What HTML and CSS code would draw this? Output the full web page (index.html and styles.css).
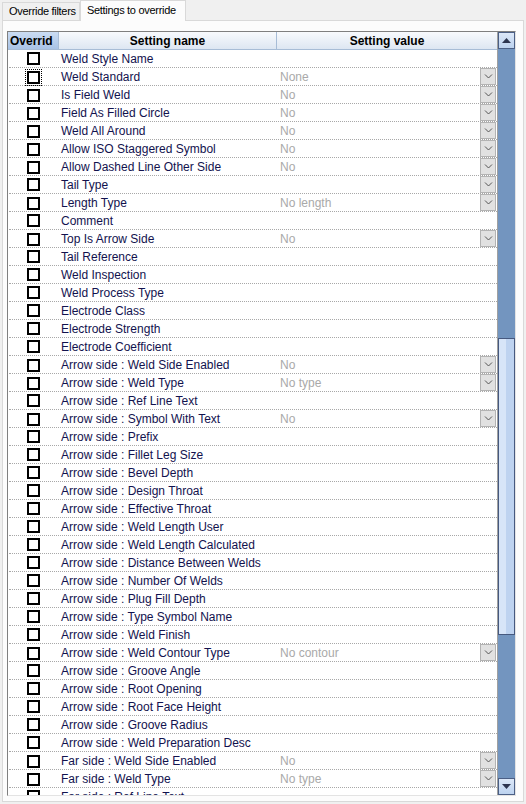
FILE: index.html
```html
<!DOCTYPE html>
<html lang="en">
<head>
  <meta charset="UTF-8">
  <title>Settings to override</title>
  <link rel="stylesheet" href="styles.css">
</head>
<body>
  <div class="tabs">
    <div class="tab">Override filters</div>
    <div class="tab active">Settings to override</div>
  </div>

  <div class="panel">
    <div class="grid">
      <div class="table">
        <div class="head">
          <div class="hcell selected">Overrid</div>
          <div class="hcell">Setting name</div>
          <div class="hcell">Setting value</div>
        </div>

        <div class="rows">
          <div class="row"><span class="check"><i class="box"></i></span><span class="name">Weld Style Name</span><span class="value"></span></div>
          <div class="row"><span class="check"><i class="box focus"></i></span><span class="name">Weld Standard</span><span class="value">None<b class="drop"><svg width="9" height="5" viewBox="0 0 9 5"><polyline points="1,0.5 4.5,4 8,0.5"/></svg></b></span></div>
          <div class="row"><span class="check"><i class="box"></i></span><span class="name">Is Field Weld</span><span class="value">No<b class="drop"><svg width="9" height="5" viewBox="0 0 9 5"><polyline points="1,0.5 4.5,4 8,0.5"/></svg></b></span></div>
          <div class="row"><span class="check"><i class="box"></i></span><span class="name">Field As Filled Circle</span><span class="value">No<b class="drop"><svg width="9" height="5" viewBox="0 0 9 5"><polyline points="1,0.5 4.5,4 8,0.5"/></svg></b></span></div>
          <div class="row"><span class="check"><i class="box"></i></span><span class="name">Weld All Around</span><span class="value">No<b class="drop"><svg width="9" height="5" viewBox="0 0 9 5"><polyline points="1,0.5 4.5,4 8,0.5"/></svg></b></span></div>
          <div class="row"><span class="check"><i class="box"></i></span><span class="name">Allow ISO Staggered Symbol</span><span class="value">No<b class="drop"><svg width="9" height="5" viewBox="0 0 9 5"><polyline points="1,0.5 4.5,4 8,0.5"/></svg></b></span></div>
          <div class="row"><span class="check"><i class="box"></i></span><span class="name">Allow Dashed Line Other Side</span><span class="value">No<b class="drop"><svg width="9" height="5" viewBox="0 0 9 5"><polyline points="1,0.5 4.5,4 8,0.5"/></svg></b></span></div>
          <div class="row"><span class="check"><i class="box"></i></span><span class="name">Tail Type</span><span class="value"><b class="drop"><svg width="9" height="5" viewBox="0 0 9 5"><polyline points="1,0.5 4.5,4 8,0.5"/></svg></b></span></div>
          <div class="row"><span class="check"><i class="box"></i></span><span class="name">Length Type</span><span class="value">No length<b class="drop"><svg width="9" height="5" viewBox="0 0 9 5"><polyline points="1,0.5 4.5,4 8,0.5"/></svg></b></span></div>
          <div class="row"><span class="check"><i class="box"></i></span><span class="name">Comment</span><span class="value"></span></div>
          <div class="row"><span class="check"><i class="box"></i></span><span class="name">Top Is Arrow Side</span><span class="value">No<b class="drop"><svg width="9" height="5" viewBox="0 0 9 5"><polyline points="1,0.5 4.5,4 8,0.5"/></svg></b></span></div>
          <div class="row"><span class="check"><i class="box"></i></span><span class="name">Tail Reference</span><span class="value"></span></div>
          <div class="row"><span class="check"><i class="box"></i></span><span class="name">Weld Inspection</span><span class="value"></span></div>
          <div class="row"><span class="check"><i class="box"></i></span><span class="name">Weld Process Type</span><span class="value"></span></div>
          <div class="row"><span class="check"><i class="box"></i></span><span class="name">Electrode Class</span><span class="value"></span></div>
          <div class="row"><span class="check"><i class="box"></i></span><span class="name">Electrode Strength</span><span class="value"></span></div>
          <div class="row"><span class="check"><i class="box"></i></span><span class="name">Electrode Coefficient</span><span class="value"></span></div>
          <div class="row"><span class="check"><i class="box"></i></span><span class="name">Arrow side : Weld Side Enabled</span><span class="value">No<b class="drop"><svg width="9" height="5" viewBox="0 0 9 5"><polyline points="1,0.5 4.5,4 8,0.5"/></svg></b></span></div>
          <div class="row"><span class="check"><i class="box"></i></span><span class="name">Arrow side : Weld Type</span><span class="value">No type<b class="drop"><svg width="9" height="5" viewBox="0 0 9 5"><polyline points="1,0.5 4.5,4 8,0.5"/></svg></b></span></div>
          <div class="row"><span class="check"><i class="box"></i></span><span class="name">Arrow side : Ref Line Text</span><span class="value"></span></div>
          <div class="row"><span class="check"><i class="box"></i></span><span class="name">Arrow side : Symbol With Text</span><span class="value">No<b class="drop"><svg width="9" height="5" viewBox="0 0 9 5"><polyline points="1,0.5 4.5,4 8,0.5"/></svg></b></span></div>
          <div class="row"><span class="check"><i class="box"></i></span><span class="name">Arrow side : Prefix</span><span class="value"></span></div>
          <div class="row"><span class="check"><i class="box"></i></span><span class="name">Arrow side : Fillet Leg Size</span><span class="value"></span></div>
          <div class="row"><span class="check"><i class="box"></i></span><span class="name">Arrow side : Bevel Depth</span><span class="value"></span></div>
          <div class="row"><span class="check"><i class="box"></i></span><span class="name">Arrow side : Design Throat</span><span class="value"></span></div>
          <div class="row"><span class="check"><i class="box"></i></span><span class="name">Arrow side : Effective Throat</span><span class="value"></span></div>
          <div class="row"><span class="check"><i class="box"></i></span><span class="name">Arrow side : Weld Length User</span><span class="value"></span></div>
          <div class="row"><span class="check"><i class="box"></i></span><span class="name">Arrow side : Weld Length Calculated</span><span class="value"></span></div>
          <div class="row"><span class="check"><i class="box"></i></span><span class="name">Arrow side : Distance Between Welds</span><span class="value"></span></div>
          <div class="row"><span class="check"><i class="box"></i></span><span class="name">Arrow side : Number Of Welds</span><span class="value"></span></div>
          <div class="row"><span class="check"><i class="box"></i></span><span class="name">Arrow side : Plug Fill Depth</span><span class="value"></span></div>
          <div class="row"><span class="check"><i class="box"></i></span><span class="name">Arrow side : Type Symbol Name</span><span class="value"></span></div>
          <div class="row"><span class="check"><i class="box"></i></span><span class="name">Arrow side : Weld Finish</span><span class="value"></span></div>
          <div class="row"><span class="check"><i class="box"></i></span><span class="name">Arrow side : Weld Contour Type</span><span class="value">No contour<b class="drop"><svg width="9" height="5" viewBox="0 0 9 5"><polyline points="1,0.5 4.5,4 8,0.5"/></svg></b></span></div>
          <div class="row"><span class="check"><i class="box"></i></span><span class="name">Arrow side : Groove Angle</span><span class="value"></span></div>
          <div class="row"><span class="check"><i class="box"></i></span><span class="name">Arrow side : Root Opening</span><span class="value"></span></div>
          <div class="row"><span class="check"><i class="box"></i></span><span class="name">Arrow side : Root Face Height</span><span class="value"></span></div>
          <div class="row"><span class="check"><i class="box"></i></span><span class="name">Arrow side : Groove Radius</span><span class="value"></span></div>
          <div class="row"><span class="check"><i class="box"></i></span><span class="name">Arrow side : Weld Preparation Desc</span><span class="value"></span></div>
          <div class="row"><span class="check"><i class="box"></i></span><span class="name">Far side : Weld Side Enabled</span><span class="value">No<b class="drop"><svg width="9" height="5" viewBox="0 0 9 5"><polyline points="1,0.5 4.5,4 8,0.5"/></svg></b></span></div>
          <div class="row"><span class="check"><i class="box"></i></span><span class="name">Far side : Weld Type</span><span class="value">No type<b class="drop"><svg width="9" height="5" viewBox="0 0 9 5"><polyline points="1,0.5 4.5,4 8,0.5"/></svg></b></span></div>
          <div class="row"><span class="check"><i class="box"></i></span><span class="name">Far side : Ref Line Text</span><span class="value"></span></div>
        </div>
      </div>

      <div class="scrollbar">
        <div class="sbtn"><svg width="9" height="5" viewBox="0 0 9 5"><polygon points="0,5 4.5,0 9,5"/></svg></div>
        <div class="track"><div class="thumb"></div></div>
        <div class="sbtn"><svg width="9" height="5" viewBox="0 0 9 5"><polygon points="0,0 4.5,5 9,0"/></svg></div>
      </div>
    </div>
  </div>
</body>
</html>
```

FILE: styles.css
```css
body {
  margin: 0;
  background-color: #f0f0f0;
  font-family: 'Liberation Sans', Arial, sans-serif;
  font-size: 12px;
  color: #000;
}

/* tab strip */
.tabs {
  display: flex;
  align-items: flex-end;
  height: 20px;
  padding-left: 2px;
}

.tab {
  box-sizing: border-box;
  height: 18px;
  width: 78px;
  padding-left: 6px;
  font-size: 11px;
  letter-spacing: -0.3px;
  line-height: 17px;
  border: 1px solid #d9d9d9;
  border-bottom: none;
  background-color: #f0f0f0;
  white-space: nowrap;
}

.tab.active {
  width: 106px;
  height: 21px;
  margin-bottom: -1px;
  padding-left: 6px;
  line-height: 19px;
  background-color: #fcfcfc;
  position: relative;
  z-index: 1;
}

.panel {
  box-sizing: border-box;
  height: 782px;
  margin: 0 2px;
  padding: 10px 7px 5px 4px;
  border: 1px solid #d9d9d9;
  background-color: #fcfcfc;
}

/* property grid */
.grid {
  display: flex;
  height: 765px;
  box-sizing: border-box;
  border-top: 1px solid #7f7f7f;
  border-left: 1px solid #7f7f7f;
  border-right: 1px solid #e3e3e3;
  border-bottom: 1px solid #e3e3e3;
  background-color: #fff;
}

.table {
  width: 489px;
  border-right: 1px solid #a0a0a0;
  overflow: hidden;
}

.head,
.row {
  display: grid;
  grid-template-columns: 51px 218px 1fr;
}

.head {
  height: 18px;
  box-sizing: border-box;
  border-bottom: 1px solid #a7bcd6;
}

.hcell {
  font-weight: bold;
  text-align: center;
  padding-top: 1px;
  line-height: 16px;
  background: linear-gradient(#f8fafd, #dde6f2);
  border-right: 1px solid #a7bcd6;
}

.hcell:last-child {
  border-right: none;
}

.hcell.selected {
  text-align: left;
  padding-left: 2px;
  background: linear-gradient(#cbdcf3, #a9c3e6);
}

.row {
  height: 18px;
  box-sizing: border-box;
  border-bottom: 1px dotted #a8a8a8;
  margin-left: 1px;
}

.check {
  display: flex;
  align-items: center;
  justify-content: center;
  padding-right: 3px;
}

.box {
  width: 13px;
  height: 13px;
  box-sizing: border-box;
  border: 2px solid #000;
  background-color: #fff;
}

.box.focus {
  outline: 1px dotted #000;
  outline-offset: 1px;
}

.name {
  padding-left: 1px;
  padding-top: 1px;
  line-height: 16px;
  color: #12124e;
  white-space: nowrap;
}

.value {
  display: flex;
  align-items: flex-start;
  padding-left: 2px;
  line-height: 18px;
  color: #a9a9a9;
}

.drop {
  display: flex;
  align-items: center;
  justify-content: center;
  box-sizing: border-box;
  width: 16px;
  height: 17px;
  margin-left: auto;
  margin-right: 1px;
  border: 1px solid #b3b3b3;
  background-color: #e1e1e1;
}

.drop svg {
  fill: none;
  stroke: #555;
  stroke-width: 1;
}

/* vertical scrollbar */
.scrollbar {
  display: flex;
  flex-direction: column;
  width: 17px;
  background-color: #7395bf;
}

.sbtn {
  display: flex;
  align-items: center;
  justify-content: center;
  height: 17px;
  box-sizing: border-box;
  border: 1px solid #4b5f85;
  background: linear-gradient(#dce8f8, #bcd2ef);
}

.sbtn svg {
  fill: #2c3550;
}

.track {
  flex: 1;
}

.thumb {
  margin-top: 289px;
  height: 297px;
  box-sizing: border-box;
  border: 1px solid #46597f;
  background: linear-gradient(90deg, #d7e5f8 0, #d7e5f8 7px, #bed3f0 7px);
}
```
